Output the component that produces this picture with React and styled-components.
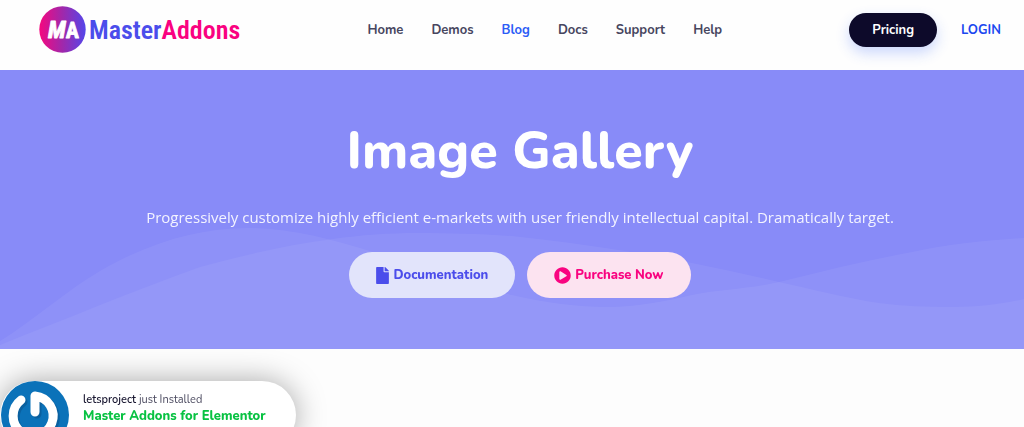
import React from "react";
import styled, { createGlobalStyle } from "styled-components";
import { FaFile, FaPlayCircle } from "react-icons/fa";

const links = ["Home", "Demos", "Blog", "Docs", "Support", "Help"];

const App = () => {
  return (
    <>
      <GlobalStyle />
      <Header>
        <Logo href="#home" aria-label="MasterAddons">
          <LogoMark />
          <LogoName>
            Master<span>Addons</span>
          </LogoName>
        </Logo>

        <Nav>
          {links.map((link) => (
            <NavLink key={link} href={`#${link}`} $active={link === "Blog"}>
              {link}
            </NavLink>
          ))}
        </Nav>

        <Actions>
          <PricingButton type="button">Pricing</PricingButton>
          <LoginLink href="#login">LOGIN</LoginLink>
        </Actions>
      </Header>

      <Hero>
        <Waves viewBox="0 0 1024 122" preserveAspectRatio="none" aria-hidden="true">
          <path d="M0 114C30 96 66 64 100 44C150 15 200 1 247 1C290 1 330 12 370 24C420 42 465 59 512 68C545 76 580 80 607 80C638 80 665 74 692 68C722 62 750 62 779 55C824 44 868 33 912 25C950 17 990 13 1024 11V122H0Z" />
          <path d="M0 118C34 104 66 92 100 78C133 65 166 52 200 40C245 28 290 17 333 12C360 8 390 6 417 6C450 6 480 7 512 9C550 13 588 18 625 24C648 28 670 32 692 36C721 42 750 48 779 55C812 62 845 71 879 76C903 79 928 80 952 80C978 80 1002 77 1024 72V122H0Z" />
        </Waves>

        <HeroContent>
          <Title>Image Gallery</Title>
          <Description>
            Progressively customize highly efficient e-markets with user friendly
            intellectual capital. Dramatically target.
          </Description>
          <Buttons>
            <HeroButton type="button">
              <FaFile />
              Documentation
            </HeroButton>
            <HeroButton type="button" $pink>
              <FaPlayCircle />
              Purchase Now
            </HeroButton>
          </Buttons>
        </HeroContent>
      </Hero>

      <Toast role="status">
        <Avatar />
        <div>
          <p className="user">
            <span>letsproject</span> just Installed
          </p>
          <ToastLink href="#elementor">Master Addons for Elementor</ToastLink>
        </div>
      </Toast>
    </>
  );
};

const LogoMark = () => (
  <svg width="47" height="47" viewBox="0 0 47 47" aria-hidden="true">
    <defs>
      <linearGradient id="mark">
        <stop offset="0" stopColor="#f5087f" />
        <stop offset="0.5" stopColor="#a028ab" />
        <stop offset="1" stopColor="#5446ea" />
      </linearGradient>
    </defs>
    <circle cx="23.5" cy="23.5" r="23.2" fill="url(#mark)" />
    <text
      x="9"
      y="32"
      fill="#fff"
      stroke="#fff"
      strokeWidth="0.8"
      strokeLinejoin="round"
      fontFamily="Roboto Condensed, Roboto, sans-serif"
      fontSize="24"
      fontWeight="700"
    >
      <tspan fontStyle="italic">M</tspan>
      <tspan fontSize="22">A</tspan>
    </text>
  </svg>
);

const Avatar = () => (
  <svg width="68" height="68" viewBox="0 0 68 68" aria-hidden="true">
    <circle cx="34" cy="34" r="34" fill="#0b72b9" />
    <g fill="none" strokeLinecap="round" strokeLinejoin="round" strokeWidth="9">
      <path stroke="#0a609f" d="M22 21A20 20 0 1 0 36 17V33" />
      <path stroke="#fff" d="M20 19A20 20 0 1 0 34 15V31" />
    </g>
  </svg>
);

export default App;

const GlobalStyle = createGlobalStyle`
  * {
    box-sizing: border-box;
  }

  body {
    margin: 0;
    overflow-x: hidden;
    background-color: #fdfdfd;
    font-family: Nunito, "Open Sans", sans-serif;
  }

  h1,
  p {
    margin: 0;
  }

  a {
    text-decoration: none;
  }

  button {
    border: 0;
    font-family: inherit;
    cursor: pointer;
  }
`;

const Header = styled.header`
  display: flex;
  align-items: center;
  justify-content: space-between;
  padding: 6px 23px 17px 39px;
  background-color: #fefefe;
`;

const Logo = styled.a`
  display: flex;
  align-items: center;
  gap: 3px;
`;

const LogoName = styled.span`
  color: #4b4deb;
  font-family: "Roboto Condensed", Roboto, sans-serif;
  font-size: 26px;
  font-weight: 600;
  line-height: 32px;

  span {
    color: #fa0180;
  }
`;

const Nav = styled.nav`
  display: flex;
  gap: 28px;
`;

const NavLink = styled.a`
  color: ${({ $active }) => ($active ? "#2b5cf6" : "#47465f")};
  font-size: 13px;
  font-weight: 700;
  line-height: 20px;
`;

const Actions = styled.div`
  display: flex;
  align-items: center;
  justify-content: flex-end;
  gap: 24px;
`;

const PricingButton = styled.button`
  height: 34px;
  padding: 0 23px;
  border-radius: 17px;
  background-color: #0d0a2a;
  box-shadow: 0 6px 14px rgba(43, 92, 246, 0.24);
  color: #ffffff;
  font-size: 13px;
  font-weight: 700;
`;

const LoginLink = styled.a`
  color: #1b48f0;
  font-size: 13px;
  font-weight: 700;
`;

const Hero = styled.section`
  display: grid;
  background-color: #888bf8;

  > * {
    grid-area: 1 / 1;
  }
`;

const Waves = styled.svg`
  align-self: end;
  width: 100%;
  height: 122px;
  fill: rgba(255, 255, 255, 0.055);
`;

const HeroContent = styled.div`
  display: flex;
  flex-direction: column;
  align-items: center;
  padding: 48px 0 51px 16px;
  z-index: 1;
`;

const Title = styled.h1`
  color: #ffffff;
  font-size: 52px;
  font-weight: 800;
  line-height: 66px;
`;

const Description = styled.p`
  margin-top: 21px;
  color: #f3f3ff;
  font-family: "Open Sans", sans-serif;
  font-size: 15px;
  line-height: 24px;
`;

const Buttons = styled.div`
  display: flex;
  gap: 12px;
  margin-top: 23px;
`;

const HeroButton = styled.button`
  display: flex;
  align-items: center;
  gap: 4px;
  height: 46px;
  padding: 0 27px;
  border-radius: 23px;
  background-color: ${({ $pink }) => ($pink ? "#fce3f0" : "#e2e4fb")};
  color: ${({ $pink }) => ($pink ? "#f90480" : "#4b4deb")};
  font-size: 13px;
  font-weight: 800;

  svg {
    width: ${({ $pink }) => ($pink ? "17px" : "13px")};
    height: 17px;
  }
`;

const Toast = styled.aside`
  position: fixed;
  left: 0;
  bottom: -22px;
  display: flex;
  gap: 14px;
  width: 296px;
  height: 68px;
  padding-left: 1px;
  border-radius: 34px;
  background-color: #ffffff;
  box-shadow: 0 0 30px rgba(0, 0, 0, 0.35);

  .user {
    margin-top: 11px;
    color: #4c4b60;
    font-size: 11px;
    line-height: 16px;

    span {
      color: #17152f;
      font-weight: 600;
    }
  }
`;

const ToastLink = styled.a`
  display: block;
  color: #08c242;
  font-size: 13px;
  font-weight: 800;
  line-height: 16px;
`;
